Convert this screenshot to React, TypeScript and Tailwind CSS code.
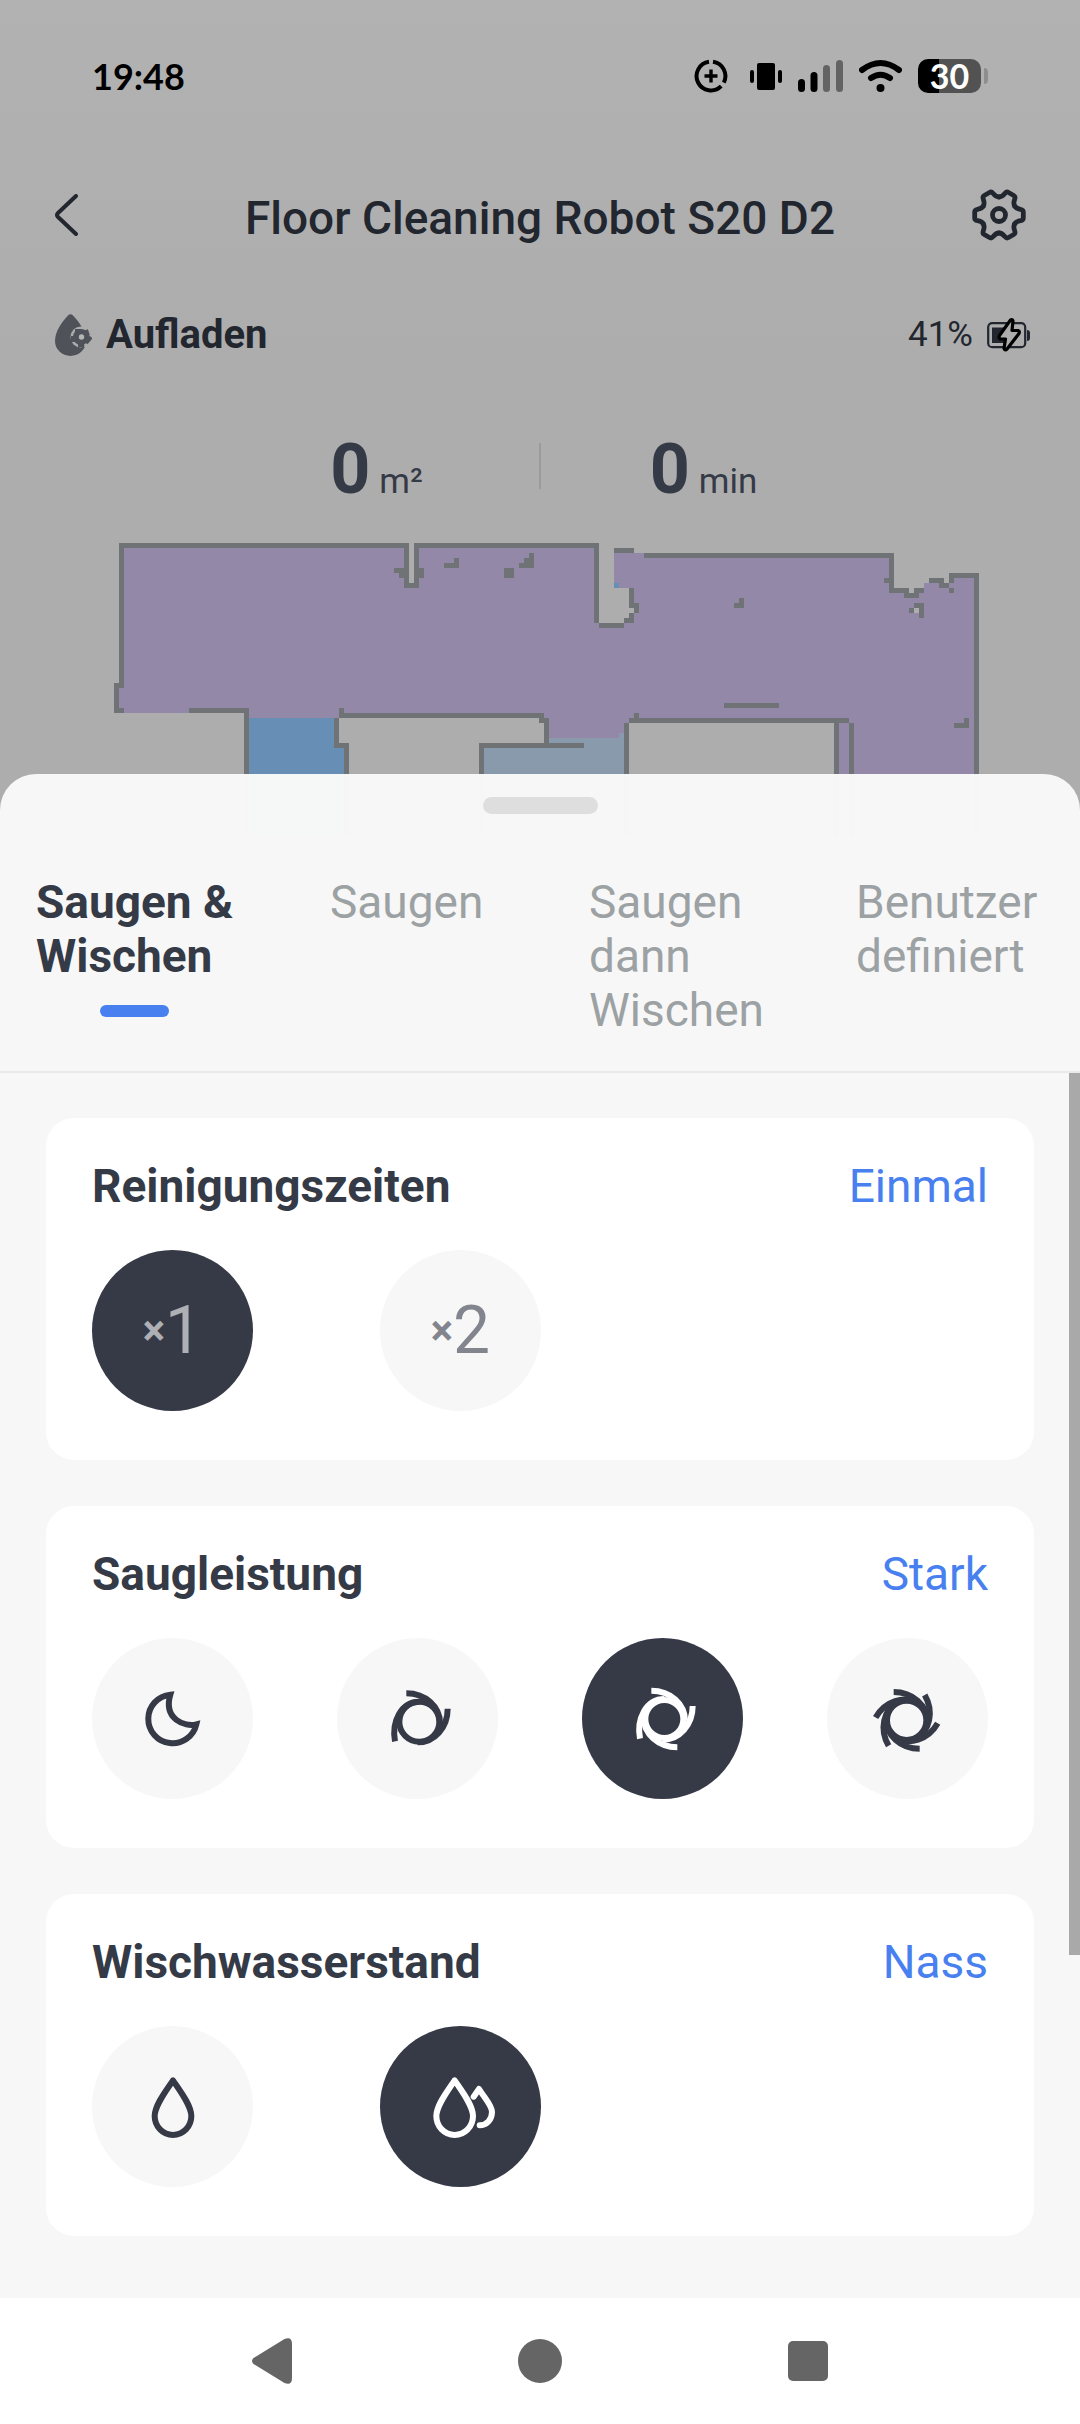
import { useState } from 'react'
import type { ReactNode } from 'react'

interface Option {
  id: string
  label: string
  icon: ReactNode
}

interface SettingCardProps {
  title: string
  options: Option[]
  initial: string
  spread?: boolean
}

const tabs = [
  { id: 'both', lines: ['Saugen &', 'Wischen'] },
  { id: 'vacuum', lines: ['Saugen'] },
  { id: 'sequence', lines: ['Saugen', 'dann', 'Wischen'] },
  { id: 'custom', lines: ['Benutzer', 'definiert'] }
]

// x, y, width, height in map cells
const walls = [
  [1, 0, 58, 1], [1, 0, 1, 29], [0, 28, 2, 1], [0, 28, 1, 6], [0, 33, 2, 1], [15, 33, 12, 1], [26, 33, 1, 26],
  [58, 0, 1, 9], [58, 8, 3, 1], [60, 0, 1, 9], [56, 5, 2, 1], [57, 5, 1, 2], [61, 5, 1, 2],
  [60, 0, 37, 1], [96, 0, 1, 16], [97, 16, 5, 1], [102, 15, 2, 1], [103, 14, 1, 2], [104, 12, 1, 2], [103, 9, 1, 4],
  [100, 1, 4, 1], [106, 2, 50, 1], [155, 2, 1, 8], [154, 7, 1, 1], [155, 9, 4, 1], [158, 10, 3, 1], [160, 9, 2, 1],
  [163, 7, 3, 1], [165, 8, 2, 1], [167, 6, 1, 2], [167, 6, 6, 1], [167, 9, 1, 1], [172, 6, 1, 53],
  [159, 13, 1, 1], [160, 12, 2, 1], [161, 12, 1, 3], [124, 12, 2, 1], [125, 11, 1, 2], [122, 32, 11, 1],
  [168, 36, 3, 1], [170, 35, 1, 2], [103, 35, 44, 1], [104, 34, 1, 1], [102, 36, 1, 23], [144, 36, 1, 23], [147, 36, 1, 23],
  [66, 4, 3, 1], [68, 3, 1, 2], [78, 5, 2, 2], [81, 4, 3, 1], [82, 3, 2, 2], [83, 2, 1, 3],
  [44, 35, 1, 6], [44, 40, 3, 1], [46, 40, 1, 19], [45, 33, 1, 2], [45, 34, 41, 1], [85, 35, 2, 1], [86, 35, 1, 5],
  [73, 40, 21, 1], [73, 40, 1, 19]
]

function StatusIcons() {
  return (
    <div className="flex items-center gap-4">
      <svg className="mr-[6px] w-[34px] h-[34px]" viewBox="-17 -17 34 34" fill="none" stroke="#000">
        <path strokeWidth="4" d="M2 -14.2A14.4 14.4 0 0 1 12.8 6.6M10.2 10.2A14.4 14.4 0 1 1 -2 -14.2" />
        <path strokeWidth="3.4" d="M0 -6.5V6.5M-6.5 0H6.5" />
      </svg>
      <svg className="w-8 h-[34px]" viewBox="0 0 32 34">
        <rect x="7" y="4" width="18" height="27" rx="2" />
        <rect x="0" y="11" width="4" height="13" rx="2" />
        <rect x="28" y="11" width="4" height="13" rx="2" />
      </svg>
      <svg className="w-[45px] h-[34px]" viewBox="0 0 45 34">
        <rect x="0" y="20" width="7" height="13" rx="3.5" />
        <rect x="12.5" y="13" width="7" height="20" rx="3.5" />
        <rect x="25" y="6" width="7" height="27" rx="3.5" fill="#636363" />
        <rect x="38" y="1" width="7" height="32" rx="3.5" fill="#636363" />
      </svg>
      <svg className="w-[43px] h-[34px]" viewBox="0 0 43 34" fill="none" stroke="#000" strokeLinecap="round">
        <path strokeWidth="6" d="M3 11Q21.5 -3 40 11" />
        <path strokeWidth="6" d="M12 19Q21.5 12.5 31 19" />
        <circle cx="21.5" cy="29" r="4" fill="#000" stroke="none" />
      </svg>
      <div className="flex items-center gap-[3px]">
        <div className="w-[63px] h-[34px] rounded-[10px] bg-linear-to-r from-black from-33% to-[#525252] to-33% flex items-center justify-center">
          <span className="text-white text-[34px] leading-[34px] font-bold font-['Lato',sans-serif]">30</span>
        </div>
        <div className="w-1 h-4 rounded-r-[4px] bg-[#8e8e8e]" />
      </div>
    </div>
  )
}

function GearIcon() {
  return (
    <svg className="w-[54px] h-[54px]" viewBox="-27 -27 54 54" fill="none" stroke="currentColor" strokeWidth="4.8" strokeLinecap="round">
      {[0, 60, 120, 180, 240, 300].map(angle => (
        <path key={angle} transform={`rotate(${angle})`} d="M15.6 -9C16.6 -7.3 18.5 -6.2 21.5 -5.7Q24.3 -5.2 24.3 -3V3Q24.3 5.2 21.5 5.7C18.5 6.2 16.6 7.3 15.6 9" />
      ))}
      <circle r="6.5" />
    </svg>
  )
}

function ModeIcon() {
  return (
    <svg className="w-[37px] h-[42px]" viewBox="0 0 37 42">
      <path fill="#4f5259" d="M13 1.5Q15.5 -1 18 1.5C24 8 31 17 31 27A15.5 15 0 0 1 0 27C0 17 7 8 13 1.5Z" />
      <circle cx="26" cy="23" r="10.5" fill="#adadad" />
      <path fill="#4f5259" d="M30 31A15.5 15 0 0 1 8 39L15 28L18 31A10 10 0 0 0 26 34Z" />
      <circle cx="26" cy="23" r="8" fill="#4f5259" />
      <path stroke="#4f5259" strokeWidth="4" d="M20 17H26M31 16L33 22M36 23L31 29M29 31H23M18 28V22" />
      <circle cx="26.5" cy="23" r="2.7" fill="#b5b5b5" />
    </svg>
  )
}

function ChargingIcon() {
  return (
    <svg className="w-[43px] h-[34px]" viewBox="0 0 43 34">
      <rect x="1.2" y="5.2" width="37" height="24" rx="4" fill="none" stroke="#22262f" strokeWidth="2.2" />
      <rect x="5" y="9.5" width="15" height="15.5" fill="#22262f" />
      <path fill="#22262f" d="M40 12Q43 12 43 15V20Q43 23 40 23Z" />
      <path fill="#adadad" stroke="#000" strokeWidth="3.2" strokeLinejoin="round" d="M23.5 2Q25.5 1 26 3L25 12.5H31Q33 13.5 32 15.5L20 31Q18 33 17 30.5L18.5 21H13Q11.5 20 12.5 17.5Z" />
    </svg>
  )
}

function FloorMap() {
  return (
    <svg className="block w-full" viewBox="-22.8 0 216 58.6" shapeRendering="crispEdges">
      <path fill="#9488a9" d="M1 0H59V9H60V0H97V16H102V15H103V14H104V13H103V9H100V2H156V9H159V10H160V9H162V8H163V7H166V8H167V6H173V59H145V36H102V38H101V39H87V35H27V34H0V28H1Z" />
      <path fill="#678eb4" d="M27 35H44V41H46V59H27ZM100 8H101V9H100Z" />
      <path fill="#8a9aad" d="M74 41H87V39H101V38H102V59H74Z" />
      <rect x="160" y="13" width="1" height="1" fill="#adadad" />
      {walls.map(([x, y, width, height], i) => (
        <rect key={i} x={x} y={y} width={width} height={height} fill="#6f7375" />
      ))}
    </svg>
  )
}

const arm = 'M-39 -85C18 -85 62 -45 62 5'

function IconBox({ children, join }: { children: ReactNode; join?: 'round' }) {
  return (
    <svg className="w-[70px] h-[70px]" viewBox="-105 -105 210 210" fill="none" stroke="currentColor" strokeWidth="18" strokeLinejoin={join} strokeLinecap={join}>
      {children}
    </svg>
  )
}

function Swirl({ x, y, radius, angles, left }: { x: number; y: number; radius: number; angles: number[]; left?: boolean }) {
  return (
    <IconBox>
      <g transform={`translate(${x} ${y})`}>
        <circle r={radius} />
        {angles.map(angle => (
          <path key={angle} transform={`rotate(${angle})`} d={arm} />
        ))}
        {left && <path d="M-73 59C-84 0 -55 -60 0 -60" />}
      </g>
    </IconBox>
  )
}

function Times({ count }: { count: number }) {
  return (
    <span className="flex items-center">
      <span className="text-[42px] leading-[48px] font-bold">×</span>
      <span className="text-[66px] leading-[78px]">{count}</span>
    </span>
  )
}

const times: Option[] = [
  { id: '1', label: 'Einmal', icon: <Times count={1} /> },
  { id: '2', label: 'Zweimal', icon: <Times count={2} /> }
]

const suction: Option[] = [
  {
    id: 'quiet',
    label: 'Leise',
    icon: <IconBox><path d="M-8 -73A73 73 0 1 0 70 16C35 25 -30 0 -8 -73Z" /></IconBox>
  },
  { id: 'normal', label: 'Standard', icon: <Swirl x={4} y={8} radius={60} angles={[0, 90]} left /> },
  { id: 'strong', label: 'Stark', icon: <Swirl x={4} y={0} radius={57} angles={[0, 90, 180]} left /> },
  { id: 'max', label: 'Max', icon: <Swirl x={-4} y={4} radius={59} angles={[0, 60, 120, 180, 240, 300]} /> }
]

const drop = 'M0 -80C-20 -50 -55 -5 -55 27A55 57 0 0 0 55 27C55 -5 20 -50 0 -80Z'

const water: Option[] = [
  { id: 'damp', label: 'Feucht', icon: <IconBox join="round"><path d={drop} /></IconBox> },
  {
    id: 'wet',
    label: 'Nass',
    icon: (
      <IconBox join="round">
        <path transform="translate(-19 0)" d={drop} />
        <path d="M38 -31L54 -54C72 -25 93 -5 93 15C93 38 77 55 56 55" />
      </IconBox>
    )
  }
]

function SettingCard({ title, options, initial, spread }: SettingCardProps) {
  const [selected, setSelected] = useState(initial)
  const current = options.find(o => o.id === selected)

  return (
    <section className="bg-white rounded-[28px] px-[46px] pt-[41px] pb-[49px]">
      <div className="flex items-center justify-between text-[46px] leading-[54px]">
        <h2 className="font-bold">{title}</h2>
        <span className="text-[#4880f0]">{current?.label}</span>
      </div>
      <div className={`mt-[37px] flex ${spread ? 'justify-between' : 'gap-[127px]'}`}>
        {options.map(option => (
          <button
            key={option.id}
            onClick={() => setSelected(option.id)}
            aria-label={option.label}
            aria-pressed={option.id === selected}
            className={`w-[161px] h-[161px] rounded-full flex items-center justify-center ${
              option.id === selected ? 'bg-[#363a47] text-white' : 'bg-[#f7f7f7] text-[#363a47]'
            }`}
          >
            {title === 'Reinigungszeiten' ? <span className="opacity-60">{option.icon}</span> : option.icon}
          </button>
        ))}
      </div>
    </section>
  )
}

export default function App() {
  const [activeTab, setActiveTab] = useState('both')

  return (
    <div className="min-h-screen flex flex-col bg-[#adadad] font-['Roboto',sans-serif] text-[#353a47]">
      {/* Dimmed robot page */}
      <header className="bg-linear-to-b from-[#b2b2b2] to-[#adadad] text-[#22262f]">
        <div className="h-[152px] px-[92px] flex items-center justify-between">
          <span className="text-black text-[36px] leading-[44px] font-bold font-['Lato',sans-serif]">19:48</span>
          <StatusIcons />
        </div>
        <div className="mt-[33px] px-[54px] flex items-center justify-between">
          <button aria-label="Zurück" className="w-[54px]">
            <svg className="w-6 h-[42px]" viewBox="0 0 24 42" fill="none" stroke="currentColor" strokeWidth="4" strokeLinecap="round" strokeLinejoin="round">
              <path d="M22 2L3.5 19.5Q2.5 21 3.5 22.5L22 40" />
            </svg>
          </button>
          <h1 className="pt-[6px] text-[46px] leading-[54px] font-medium">Floor Cleaning Robot S20 D2</h1>
          <button aria-label="Einstellungen">
            <GearIcon />
          </button>
        </div>
        <div className="mt-[66px] pl-[55px] pr-[50px] flex items-center justify-between">
          <div className="flex items-center gap-[14px]">
            <ModeIcon />
            <span className="text-[40px] leading-[47px] font-bold">Aufladen</span>
          </div>
          <div className="flex items-center gap-[14px]">
            <span className="text-[35px] leading-[41px]">41%</span>
            <ChargingIcon />
          </div>
        </div>
      </header>

      <div className="mt-[70px] flex items-center justify-center">
        <p className="w-[325px] flex items-baseline justify-center gap-[9px]">
          <span className="text-[70px] leading-[82px] font-bold">0</span>
          <span className="text-[35px]">m²</span>
        </p>
        <div className="w-[2px] h-[46px] mb-[6px] bg-[#9b9b9b]" />
        <p className="w-[325px] flex items-baseline justify-center gap-[9px]">
          <span className="text-[70px] leading-[82px] font-bold">0</span>
          <span className="text-[35px]">min</span>
        </p>
      </div>

      <div className="mt-[33px]">
        <FloorMap />
      </div>

      {/* Settings sheet, slides over the lower edge of the map */}
      <main className="relative -mt-[62px] grow flex flex-col">
        <div className="h-[62px] pt-[23px] rounded-t-[36px] bg-[#f8f8f8]/99">
          <div className="mx-auto w-[115px] h-[17px] rounded-full bg-[#dedede]" />
        </div>
        <nav className="bg-[#f7f7f7] pt-[39px] pb-[34px] pl-9 grid grid-cols-[294fr_259fr_267fr_224fr] items-start border-b-2 border-[#e9e9e9]">
          {tabs.map(tab => (
            <button
              key={tab.id}
              onClick={() => setActiveTab(tab.id)}
              className={`w-fit text-left text-[46px] leading-[54px] ${
                tab.id === activeTab ? 'font-bold text-[#353a47]' : 'text-[#9ca1a3]'
              }`}
            >
              {tab.lines.map(line => (
                <span key={line} className="block whitespace-nowrap">{line}</span>
              ))}
              {tab.id === activeTab && <span className="block mx-auto mt-[22px] w-[69px] h-3 rounded-full bg-[#4880f0]" />}
            </button>
          ))}
        </nav>
        <div className="relative grow bg-[#f7f7f7] px-[46px] pt-[45px] pb-[62px] flex flex-col gap-[46px]">
          <SettingCard title="Reinigungszeiten" options={times} initial="1" />
          <SettingCard title="Saugleistung" options={suction} initial="strong" spread />
          <SettingCard title="Wischwasserstand" options={water} initial="wet" />
          <div className="absolute right-0 top-0 w-[11px] h-[72%] bg-[#a9a9a9]" />
        </div>
      </main>

      {/* System navigation */}
      <footer className="h-[126px] bg-white flex items-center justify-center text-[#656565]">
        <button aria-label="Zurück" className="w-[268px] flex justify-center">
          <svg className="w-11 h-[46px]" viewBox="0 0 44 46" fill="currentColor">
            <path d="M3.500 20L34.500 1Q42 -2 42 6V40Q42 48 34.500 45L3.500 26Q0.500 23 3.500 20Z" />
          </svg>
        </button>
        <button aria-label="Startseite" className="w-[268px] flex justify-center">
          <span className="w-11 h-11 rounded-full bg-current" />
        </button>
        <button aria-label="Übersicht" className="w-[268px] flex justify-center">
          <span className="w-10 h-10 rounded-[5px] bg-current" />
        </button>
      </footer>
    </div>
  )
}
